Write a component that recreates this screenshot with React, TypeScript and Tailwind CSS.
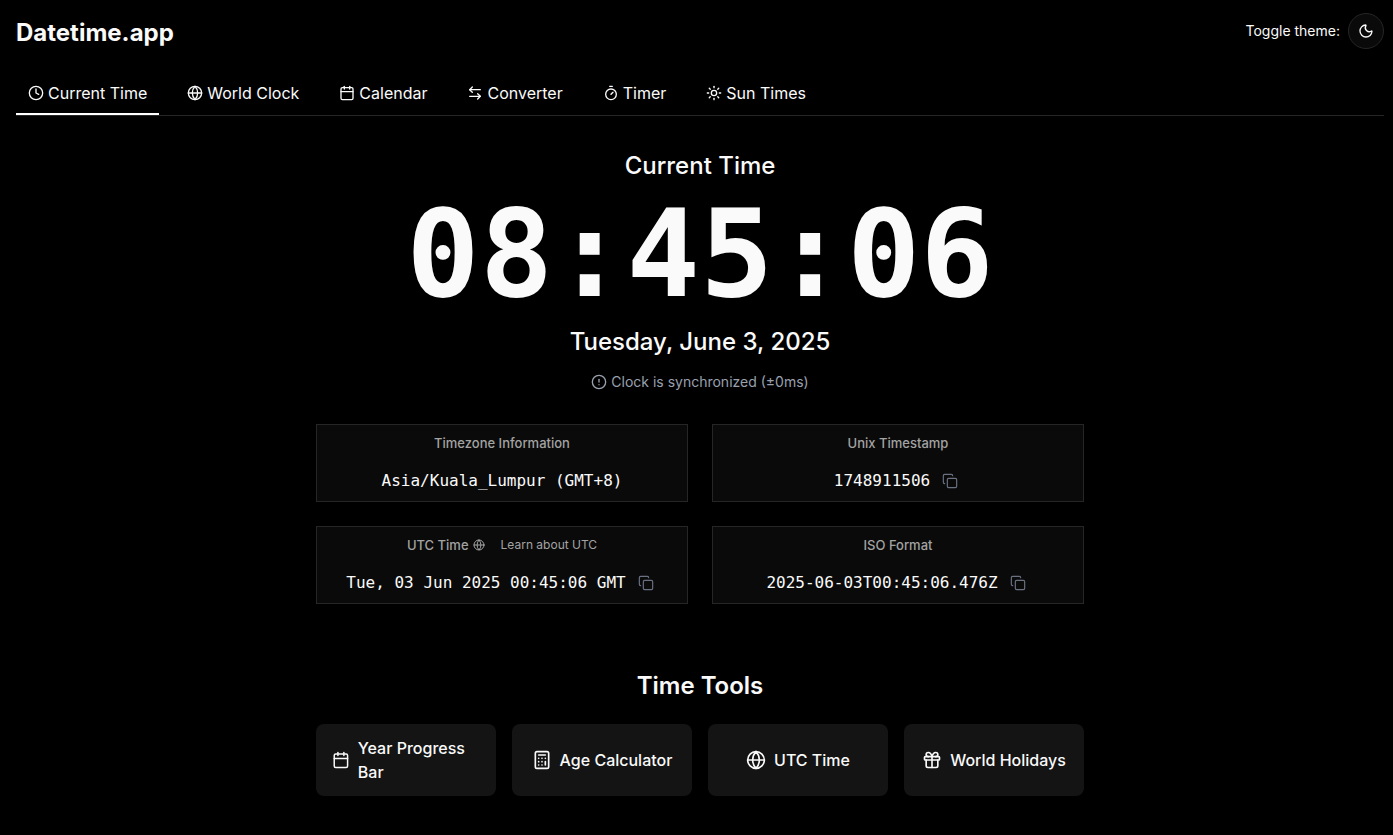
import type { ReactNode } from "react";
import {
    ArrowLeftRight,
    Calculator,
    Calendar,
    CircleAlert,
    Clock,
    Copy,
    Gift,
    Globe,
    Moon,
    Sun,
    Timer,
    type LucideIcon,
} from "lucide-react";
import clsx from "clsx";

type NavItem = { label: string; href: string; icon: LucideIcon };

const TABS: NavItem[] = [
    { label: "Current Time", href: "#now", icon: Clock },
    { label: "World Clock", href: "#world", icon: Globe },
    { label: "Calendar", href: "#calendar", icon: Calendar },
    { label: "Converter", href: "#converter", icon: ArrowLeftRight },
    { label: "Timer", href: "#timer", icon: Timer },
    { label: "Sun Times", href: "#sun", icon: Sun },
];

const TOOLS: NavItem[] = [
    { label: "Year Progress Bar", href: "#year-progress", icon: Calendar },
    { label: "Age Calculator", href: "#age", icon: Calculator },
    { label: "UTC Time", href: "#utc", icon: Globe },
    { label: "World Holidays", href: "#holidays", icon: Gift },
];

function InfoCard({ title, value, copy = true }: { title: ReactNode; value: string; copy?: boolean }) {
    return (
        <div className="flex flex-col items-center gap-4 border border-[#262626] bg-[#0a0a0a] p-2">
            <div className="flex items-center text-[13px] leading-5 font-medium text-[#a3a3a3]">{title}</div>
            <div className="flex h-6 items-center gap-2">
                <span className="font-['DejaVu_Sans_Mono',monospace] text-base whitespace-nowrap">{value}</span>
                {copy && (
                    <button
                        type="button"
                        aria-label={`Copy ${value}`}
                        onClick={() => navigator.clipboard.writeText(value)}
                        className="p-1 text-gray-500 hover:text-gray-300"
                    >
                        <Copy size={16} strokeWidth={1.75} />
                    </button>
                )}
            </div>
        </div>
    );
}

export default function App() {
    return (
        <div className="min-h-screen bg-black pr-[9px] pl-4 font-[Inter,sans-serif] text-neutral-50">
            {/* Header */}
            <header className="flex items-center justify-between pt-[13px] pb-5">
                <h1 className="pt-1 text-2xl font-bold">Datetime.app</h1>
                <div className="flex items-center gap-2">
                    <span className="text-sm">Toggle theme:</span>
                    <button
                        type="button"
                        aria-label="Toggle theme"
                        className="grid size-9 place-items-center rounded-full border border-[#262626] bg-[#0a0a0a]"
                    >
                        <Moon size={16} />
                    </button>
                </div>
            </header>

            {/* Tabs */}
            <nav className="flex flex-wrap gap-x-4 border-b border-[#262626]">
                {TABS.map(({ label, href, icon: Icon }, i) => (
                    <a
                        key={label}
                        href={href}
                        aria-current={i === 0 ? "page" : undefined}
                        className={clsx(
                            "flex h-[46px] items-center gap-1 border-b-2 px-3 pt-1 whitespace-nowrap",
                            i === 0 ? "border-white" : "border-transparent"
                        )}
                    >
                        <Icon size={16} />
                        {label}
                    </a>
                ))}
            </nav>

            <main className="mx-auto max-w-3xl pt-[34px] pb-8">
                {/* Clock */}
                <section className="flex flex-col items-center">
                    <h2 className="text-2xl font-medium">Current Time</h2>
                    <time className="mt-2 font-['DejaVu_Sans_Mono',monospace] text-[122px] leading-[128px] font-bold">
                        08:45:06
                    </time>
                    <p className="mt-2 text-2xl font-medium">Tuesday, June 3, 2025</p>
                    <p className="mt-[14px] flex items-center gap-1 text-sm text-gray-400">
                        <CircleAlert size={16} />
                        Clock is synchronized (±0ms)
                    </p>
                </section>

                <section className="mt-8 grid gap-6 md:grid-cols-2">
                    <InfoCard title="Timezone Information" value="Asia/Kuala_Lumpur (GMT+8)" copy={false} />
                    <InfoCard title="Unix Timestamp" value="1748911506" />
                    <InfoCard
                        title={
                            <>
                                UTC Time
                                <Globe size={12} className="ml-1" />
                                <a href="#about-utc" className="ml-4 text-xs leading-5 font-normal">
                                    Learn about UTC
                                </a>
                            </>
                        }
                        value="Tue, 03 Jun 2025 00:45:06 GMT"
                    />
                    <InfoCard title="ISO Format" value="2025-06-03T00:45:06.476Z" />
                </section>

                {/* Tools */}
                <section className="mt-16">
                    <h2 className="pt-0.5 text-center text-2xl font-semibold">Time Tools</h2>
                    <div className="mt-[22px] grid grid-cols-2 gap-4 md:grid-cols-4">
                        {TOOLS.map(({ label, href, icon: Icon }) => (
                            <a
                                key={label}
                                href={href}
                                className="flex min-h-[72px] items-center justify-center gap-2 rounded-lg bg-[#141414] px-4 py-3 font-medium"
                            >
                                <Icon size={20} />
                                <span>{label}</span>
                            </a>
                        ))}
                    </div>
                </section>
            </main>
        </div>
    );
}
